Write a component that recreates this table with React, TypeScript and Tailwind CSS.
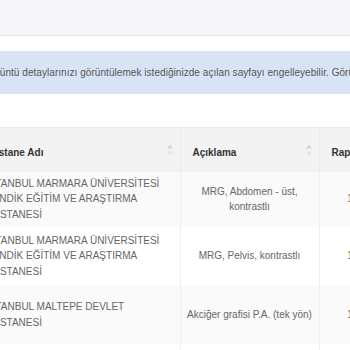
function SortIcon() {
  return (
    <svg width="6" height="11" viewBox="0 0 6 11" className="absolute right-[7px] top-1/2 -translate-y-1/2">
      <path d="M3 0 L6 4 L0 4 Z" fill="#d4d4d4" />
      <path d="M3 11 L6 7 L0 7 Z" fill="#e4e4e4" />
    </svg>
  );
}

const rows = [
  {
    hastane: "İSTANBUL MARMARA ÜNİVERSİTESİ PENDİK EĞİTİM VE ARAŞTIRMA HASTANESİ",
    aciklama: "MRG, Abdomen - üst, kontrastlı",
    tarih: "17.04.2019",
    h: "h-[55px]",
  },
  {
    hastane: "İSTANBUL MARMARA ÜNİVERSİTESİ PENDİK EĞİTİM VE ARAŞTIRMA HASTANESİ",
    aciklama: "MRG, Pelvis, kontrastlı",
    tarih: "17.04.2019",
    h: "h-[59px]",
  },
  {
    hastane: "İSTANBUL MALTEPE DEVLET HASTANESİ",
    aciklama: "Akciğer grafisi P.A. (tek yön)",
    tarih: "12.02.2019",
    h: "h-[58px]",
  },
];

export default function App() {
  return (
    <div className="w-[350px] h-[350px] overflow-hidden bg-white font-['Liberation_Sans',Arial,sans-serif]">
      {/* Navbar */}
      <div className="h-[36px] bg-[#f7f7f9] border-b border-[#e5e5e7]" />

      {/* Info alert */}
      <div className="mt-[15px] h-[43px] bg-[#d8e4f6] flex items-center overflow-hidden">
        <p className="-ml-[17px] whitespace-nowrap text-[10px] tracking-[0.05px] text-[#555]">
          Görüntü detaylarınızı görüntülemek istediğinizde açılan sayfayı engelleyebilir. Görüntüleri açmak için tarayıcınızın açılır pencere ayarlarını kontrol ediniz.
        </p>
      </div>

      {/* Table */}
      <div className="mt-[33px] -ml-[26px]">
        <table className="border-collapse text-[10px] leading-[15.5px] text-[#666] table-fixed w-[451px]">
          <colgroup>
            <col className="w-[206px]" />
            <col className="w-[139px]" />
            <col className="w-[106px]" />
          </colgroup>
          <thead>
            <tr className="h-[44px] bg-[#f3f3f4] border-t border-[#ececec]">
              <th className="relative px-3 pt-[5px] text-left font-bold text-[#333] border-r border-[#e8e8e8]">
                Hastane Adı
                <SortIcon />
              </th>
              <th className="relative px-3 pt-[5px] text-left font-bold text-[#333] border-r border-[#e8e8e8]">
                Açıklama
                <SortIcon />
              </th>
              <th className="relative px-3 pt-[5px] text-left font-bold text-[#333]">
                Rapor Tarihi
                <SortIcon />
              </th>
            </tr>
          </thead>
          <tbody>
            {rows.map((r, i) => (
              <tr key={i} className={`${r.h} ${i % 2 === 0 ? "bg-[#fafafa]" : "bg-white"}`}>
                <td className="pl-3 pr-[12px] text-left align-middle border-r border-[#efefef]">{r.hastane}</td>
                <td className="px-[4px] text-center align-middle border-r border-[#efefef]">{r.aciklama}</td>
                <td className="px-[4px] text-center align-middle">{r.tarih}</td>
              </tr>
            ))}
            <tr className="h-[20px] bg-white">
              <td className="border-r border-[#efefef]" />
              <td className="border-r border-[#efefef]" />
              <td />
            </tr>
          </tbody>
        </table>
      </div>
    </div>
  );
}
